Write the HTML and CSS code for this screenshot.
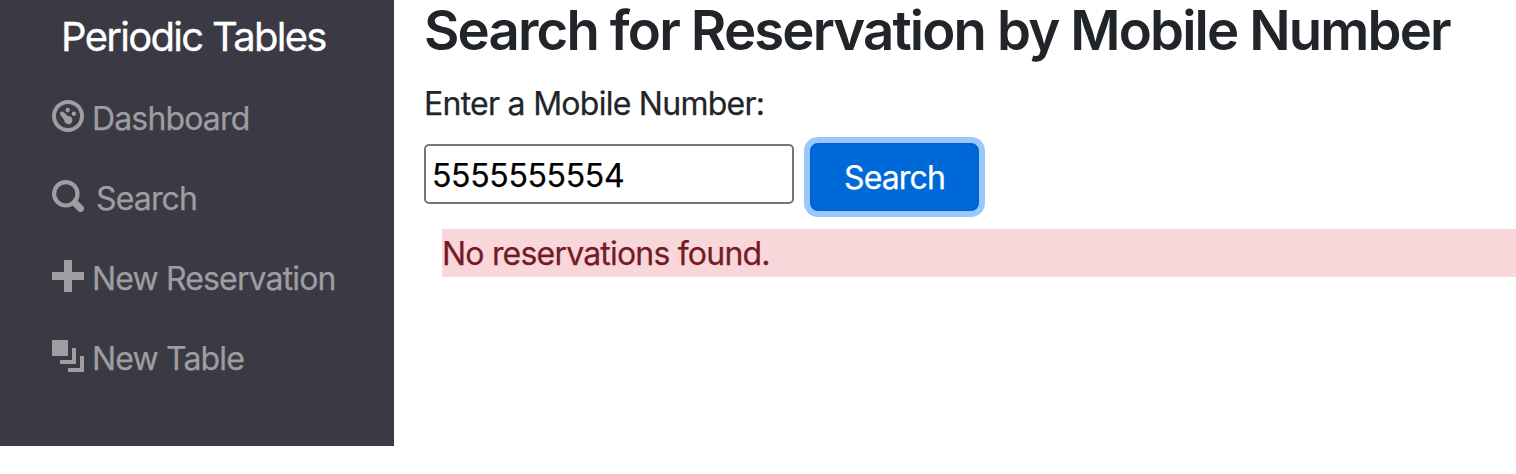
FILE: index.html
```html
<!DOCTYPE html>
<html lang="en">
<head>
<meta charset="utf-8">
<title>Periodic Tables</title>
<link rel="stylesheet" href="styles.css">
</head>
<body>
<div class="layout">
  <nav class="sidebar">
    <a class="brand">Periodic Tables</a>
    <ul class="menu">
      <li class="item"><svg class="icon" viewBox="0 0 32 32"><circle cx="16" cy="16" r="14" fill="none" stroke="currentColor" stroke-width="4"/><circle cx="15.700" cy="10" r="2.200"/><circle cx="21.900" cy="13.700" r="2.200"/><path d="M8.300 14.800C7 12.500 9.700 10.500 11.700 12.200L15.800 15.900L18.500 16.400C21 18.300 20.900 21.800 18.900 23.400C16.400 25.400 12.300 23.700 12 20.100Z"/></svg><span class="label">Dashboard</span></li>
      <li class="item"><svg class="icon" viewBox="0 0 32 32"><circle cx="13.800" cy="13.800" r="11.700" fill="none" stroke="currentColor" stroke-width="4.200"/><path d="M23 23l5.500 5.500" stroke="currentColor" stroke-width="7" stroke-linecap="round"/></svg><span class="label search">Search</span></li>
      <li class="item"><svg class="icon" viewBox="0 0 32 32"><path d="M12 0h8v12h12v8H20v12h-8V20H0v-8h12z"/></svg><span class="label">New Reservation</span></li>
      <li class="item"><svg class="icon" viewBox="0 0 32 32"><path d="M0 0h16v16H0zM20 8h4v16H8v-4h12zM28 16h4v16H16v-4h12z"/></svg><span class="label">New Table</span></li>
    </ul>
  </nav>
  <main class="content">
    <h1 class="title">Search for Reservation by Mobile Number</h1>
    <label class="field-label" for="mobile">Enter a Mobile Number:</label>
    <form class="form">
      <input class="input" id="mobile" type="text" value="5555555554">
      <button class="button" type="button">Search</button>
    </form>
    <p class="alert">No reservations found.</p>
  </main>
</div>
</body>
</html>
```
FILE: styles.css
```css
* { box-sizing: border-box; }
body { margin: 0; height: 474px; overflow: hidden; background: #fff; color: #212529; font: 32px/48px Inter, sans-serif; }
.layout { display: flex; height: 474px; }
.sidebar { flex: none; width: 394px; height: 446px; background: #3b3a44; color: #9d9da2; }
.brand { display: block; padding: 7px 0 0 61px; height: 79px; color: #fff; font-size: 40px; line-height: 60px; letter-spacing: -1.700px; white-space: nowrap; -webkit-text-stroke: 0.300px currentColor; }
.menu { list-style: none; margin: 0; padding: 0 0 0 52px; }
.item { display: flex; height: 80px; padding-top: 16px; white-space: nowrap; }
.icon { flex: none; width: 32px; height: 32px; margin: 5px 8px 0 0; fill: currentColor; }
.label { letter-spacing: -0.850px; }
.search { margin-left: 4px; }
.content { flex: 1; min-width: 0; padding-left: 30px; }
.title { margin: 0; height: 80px; font-size: 54.500px; line-height: 60px; font-weight: 600; letter-spacing: -1.850px; white-space: nowrap; }
.field-label { display: block; height: 63px; letter-spacing: -0.730px; }
.form { display: flex; align-items: flex-start; height: 86px; margin: 0; }
.input { width: 370px; height: 60px; margin: 1px 16px 0 0; padding: 4px 6px 2px; border: 2px solid #767676; border-radius: 5px; font: inherit; color: #000; letter-spacing: -0.350px; }
.button { width: 169px; height: 68px; padding: 2px 0 0; border: 2px solid #0062cc; border-radius: 8px; background: #0069d9; box-shadow: 0 0 0 6px #99c8ff; color: #fff; font: inherit; letter-spacing: -0.850px; }
.alert { margin: 0 0 0 18px; padding-top: 1px; height: 48px; background: #f9d6da; color: #721c24; letter-spacing: -0.800px; }
.label, .field-label, .input, .button, .alert { -webkit-text-stroke: 0.250px currentColor; }
```
